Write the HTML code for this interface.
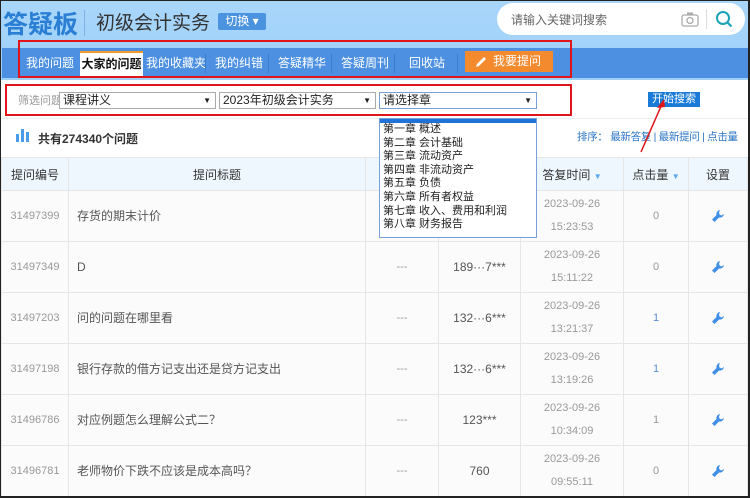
<!DOCTYPE html>
<html><head><meta charset="utf-8"><style>
*{margin:0;padding:0;box-sizing:border-box}
html,body{width:750px;height:498px;overflow:hidden}
body{font-family:"Liberation Sans","Noto Sans CJK SC",sans-serif;background:#fff;position:relative;font-size:12px;color:#333}
.frame{position:absolute;left:0;top:0;width:750px;height:498px;border:1px solid #222;border-right:2px solid #222;border-bottom:2px solid #222;z-index:50;pointer-events:none}
.top{position:absolute;left:0;top:0;width:750px;height:92px;background:linear-gradient(#a9d6fb,#9ccff8)}
.a{position:absolute;white-space:nowrap}
.logo{left:3px;top:5px;font-size:25px;font-weight:bold;color:#2a7fd4;letter-spacing:0}
.sub{left:96px;top:8px;font-size:19px;color:#333}
.sw{left:218px;top:13px;width:48px;height:17px;background:#4b93de;color:#fff;font-size:12px;line-height:17px;text-align:center;border-radius:2px}
.search{left:497px;top:3px;width:248px;height:32px;background:#fff;border-radius:16px}
.nav{left:2px;top:48px;width:746px;height:30px;background:#4d90e2}
.tab{position:absolute;top:51px;height:27px;line-height:24px;color:#fff;font-size:12px;white-space:nowrap}
.sep{position:absolute;top:54px;width:1px;height:19px;background:#3b7dcc}
.red{position:absolute;border:2px solid #e0141a}
.sel{position:absolute;top:92px;height:17px;border:1px solid #aaa;background:#fff;font-size:12px;line-height:15px;padding-left:3px;color:#222}
.sel:after{content:"▼";position:absolute;right:4px;top:0;font-size:8px}
table{position:absolute;left:1px;top:157px;border-collapse:collapse;width:747px}
td,th{border:1px solid #e6e6e6;text-align:center;font-weight:normal}
th{height:33px;background:#eef7fe;font-size:12px;color:#333}
td{height:51px;color:#999;font-size:11px;background:#fbfbfb;line-height:23px}
td.t{text-align:left;padding-left:8px;font-size:12px;color:#555}
td.u{color:#555;font-size:12px}
.dd{position:absolute;left:379px;top:118px;width:158px;height:120px;border:1px solid #7a9fd6;background:#fff;font-size:11px;line-height:13.6px;padding-left:3px;color:#222;z-index:5}
.ar{color:#5aa6ef;font-size:8px}
</style></head><body>
<div class="top"></div>
<div class="a logo">答疑板</div>
<div class="a" style="left:84px;top:10px;width:1px;height:26px;background:#7fb2e0"></div>
<div class="a sub">初级会计实务</div>
<div class="a sw">切换 ▾</div>
<div class="a search"><span class="a" style="left:14px;top:8px;color:#666;font-size:12px">请输入关键词搜索</span>
<svg class="a" style="left:184px;top:8px" width="18" height="16"><rect x="1" y="4" width="16" height="11" rx="2" fill="none" stroke="#aaa" stroke-width="1.3"/><rect x="6" y="1.5" width="6" height="3" fill="#aaa"/><circle cx="9" cy="9.5" r="3" fill="none" stroke="#aaa" stroke-width="1.3"/></svg>
<div class="a" style="left:209px;top:6px;width:1px;height:20px;background:#ddd"></div>
<svg class="a" style="left:218px;top:7px" width="18" height="18"><circle cx="8" cy="8" r="6" fill="none" stroke="#1aa3b8" stroke-width="2"/><line x1="12.5" y1="12.5" x2="16.5" y2="16.5" stroke="#1aa3b8" stroke-width="2.2"/></svg></div>
<div class="a nav"></div>
<div class="tab" style="left:26px">我的问题</div>
<div class="tab" style="left:80px;width:63px;background:#fff;color:#111;font-weight:bold;text-align:center;border-top:2px solid #f39a2c;line-height:22px">大家的问题</div>
<div class="tab" style="left:146px">我的收藏夹</div><div class="sep" style="left:205px"></div>
<div class="tab" style="left:215px">我的纠错</div><div class="sep" style="left:268px"></div>
<div class="tab" style="left:278px">答疑精华</div><div class="sep" style="left:331px"></div>
<div class="tab" style="left:341px">答疑周刊</div><div class="sep" style="left:394px"></div>
<div class="tab" style="left:409px">回收站</div><div class="sep" style="left:457px"></div>
<div class="a" style="left:465px;top:51px;width:88px;height:21px;background:#f38a2e;color:#fff;font-size:12px;line-height:21px;padding-left:28px">我要提问</div>
<svg class="a" style="left:474px;top:55px" width="14" height="14"><path d="M2 12 L3 9 L10 2 L12 4 L5 11 Z" fill="#fff"/></svg>
<div class="red" style="left:18px;top:40px;width:554px;height:38px"></div>
<div class="a" style="left:0;top:80px;width:750px;height:38px;background:#fff"></div>
<div class="a" style="left:18px;top:94px;font-size:11px;line-height:14px;color:#999">筛选问题</div>
<div class="sel" style="left:59px;width:157px">课程讲义</div>
<div class="sel" style="left:219px;width:157px">2023年初级会计实务</div>
<div class="sel" style="left:379px;width:158px;border-color:#7a9fd6">请选择章</div>
<div class="red" style="left:5px;top:84px;width:567px;height:32px"></div>
<div class="a" style="left:648px;top:92px;width:52px;height:15px;background:#1a7ad8;color:#fff;font-size:11px;line-height:15px;text-align:center">开始搜索</div>
<div class="a" style="left:0;top:118px;width:750px;height:1px;background:#eee"></div>
<svg class="a" style="left:16px;top:128px" width="14" height="14"><rect x="0" y="6" width="3" height="8" fill="#4a9be8"/><rect x="5" y="1" width="3" height="13" fill="#4a9be8"/><rect x="10" y="4" width="3" height="10" fill="#4a9be8"/></svg>
<div class="a" style="left:38px;top:130px;font-size:12px;font-weight:bold;color:#333">共有274340个问题</div>
<div class="a" style="left:577px;top:129px;font-size:10.5px;color:#2a74c4;letter-spacing:-0.3px">排序：&nbsp;最新答复 | 最新提问 | 点击量</div>
<svg class="a" style="left:635px;top:96px;z-index:6" width="40" height="60"><line x1="6" y1="56" x2="27" y2="8" stroke="#e0141a" stroke-width="1.5"/><path d="M29 3 L22 12 L30 11 Z" fill="#e0141a"/></svg>
<table>
<tr><th style="width:67px">提问编号</th><th style="width:297px">提问标题</th><th style="width:73px"></th><th style="width:82px"></th><th style="width:103px">答复时间 <span class="ar">▼</span></th><th style="width:65px">点击量 <span class="ar">▼</span></th><th>设置</th></tr>
<tr><td>31497399</td><td class="t">存货的期末计价</td><td>---</td><td class="u"></td><td>2023-09-26<br>15:23:53</td><td>0</td><td>W</td></tr>
<tr><td>31497349</td><td class="t">D</td><td>---</td><td class="u">189···7***</td><td>2023-09-26<br>15:11:22</td><td>0</td><td>W</td></tr>
<tr><td>31497203</td><td class="t">问的问题在哪里看</td><td>---</td><td class="u">132···6***</td><td>2023-09-26<br>13:21:37</td><td style="color:#5a8ed0">1</td><td>W</td></tr>
<tr><td>31497198</td><td class="t">银行存款的借方记支出还是贷方记支出</td><td>---</td><td class="u">132···6***</td><td>2023-09-26<br>13:19:26</td><td style="color:#5a8ed0">1</td><td>W</td></tr>
<tr><td>31496786</td><td class="t">对应例题怎么理解公式二？</td><td>---</td><td class="u">123***</td><td>2023-09-26<br>10:34:09</td><td>1</td><td>W</td></tr>
<tr><td>31496781</td><td class="t">老师物价下跌不应该是成本高吗？</td><td>---</td><td class="u">760</td><td>2023-09-26<br>09:55:11</td><td>0</td><td>W</td></tr>
</table>
<div class="dd"><div style="background:#1e72d8;color:#fff;height:4px;margin-left:-3px;overflow:hidden"></div>第一章 概述<br>第二章 会计基础<br>第三章 流动资产<br>第四章 非流动资产<br>第五章 负债<br>第六章 所有者权益<br>第七章 收入、费用和利润<br>第八章 财务报告</div>
<div class="frame"></div>
<script>
document.querySelectorAll('td').forEach(function(t){if(t.textContent==='W'){t.innerHTML='<svg width="14" height="14" viewBox="0 0 14 14" style="vertical-align:middle"><path d="M9 1 A4 4 0 0 0 5.5 6 L1 10.5 L3.5 13 L8 8.5 A4 4 0 0 0 13 5 L10.5 6.5 L8.5 5.5 L8 3.5 Z" fill="#3f8fe6"/></svg>';}});
</script>
</body></html>
